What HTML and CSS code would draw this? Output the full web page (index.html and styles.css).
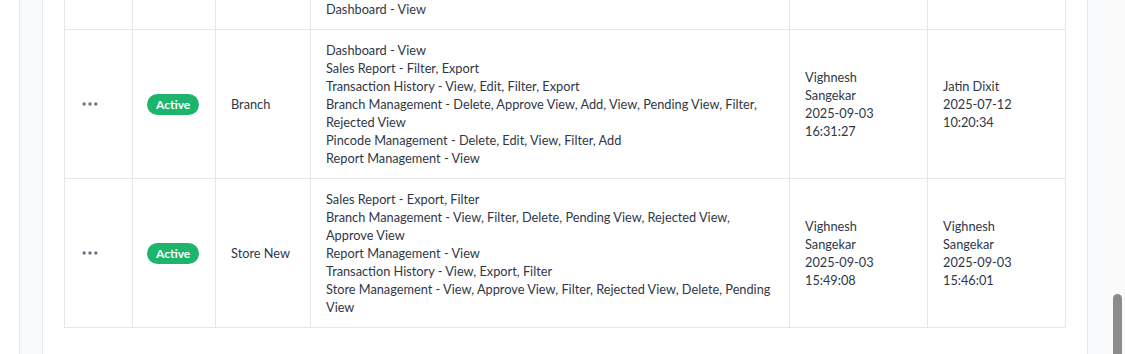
FILE: index.html
```html
<!DOCTYPE html>
<html lang="en">
<head>
<meta charset="utf-8">
<title>Roles</title>
<link rel="stylesheet" href="styles.css">
</head>
<body>
<div class="app">
  <aside class="rail"></aside>
  <div class="gutter"></div>
  <main class="card">
    <table class="roles">
      <colgroup>
        <col class="c-act"><col class="c-status"><col class="c-name"><col class="c-perm"><col class="c-by"><col class="c-by">
      </colgroup>
      <tbody>
        <tr>
          <td></td>
          <td></td>
          <td></td>
          <td class="perm">
            <div>Dashboard - View</div>
          </td>
          <td class="by"></td>
          <td class="by"></td>
        </tr>
        <tr>
          <td class="act"><button class="more" aria-label="More actions"><svg viewBox="0 0 24 24" width="20" height="20" fill="none" stroke="currentColor" stroke-width="2" stroke-linecap="round" stroke-linejoin="round"><circle cx="12" cy="12" r="1"/><circle cx="19" cy="12" r="1"/><circle cx="5" cy="12" r="1"/></svg></button></td>
          <td class="status"><span class="badge">Active</span></td>
          <td>Branch</td>
          <td class="perm">
            <div>Dashboard - View</div>
            <div>Sales Report - Filter, Export</div>
            <div>Transaction History - View, Edit, Filter, Export</div>
            <div>Branch Management - Delete, Approve View, Add, View, Pending View, Filter, Rejected View</div>
            <div>Pincode Management - Delete, Edit, View, Filter, Add</div>
            <div>Report Management - View</div>
          </td>
          <td class="by">Vighnesh Sangekar<br>2025-09-03<br>16:31:27</td>
          <td class="by">Jatin Dixit<br>2025-07-12<br>10:20:34</td>
        </tr>
        <tr>
          <td class="act"><button class="more" aria-label="More actions"><svg viewBox="0 0 24 24" width="20" height="20" fill="none" stroke="currentColor" stroke-width="2" stroke-linecap="round" stroke-linejoin="round"><circle cx="12" cy="12" r="1"/><circle cx="19" cy="12" r="1"/><circle cx="5" cy="12" r="1"/></svg></button></td>
          <td class="status"><span class="badge">Active</span></td>
          <td>Store New</td>
          <td class="perm">
            <div>Sales Report - Export, Filter</div>
            <div>Branch Management - View, Filter, Delete, Pending View, Rejected View, Approve View</div>
            <div>Report Management - View</div>
            <div>Transaction History - View, Export, Filter</div>
            <div>Store Management - View, Approve View, Filter, Rejected View, Delete, Pending View</div>
          </td>
          <td class="by">Vighnesh Sangekar<br>2025-09-03<br>15:49:08</td>
          <td class="by">Vighnesh Sangekar<br>2025-09-03<br>15:46:01</td>
        </tr>
      </tbody>
    </table>
  </main>
  <div class="gutter gutter-right"></div>
  <div class="scrollbar"><div class="thumb"></div></div>
</div>
</body>
</html>
```

FILE: styles.css
```css
* { box-sizing: border-box; }
html, body { margin: 0; padding: 0; }
body {
  font-family: "Lato", "Noto Sans", sans-serif;
  font-size: 12.75px;
  color: #2f3747;
  background: #ffffff;
}
.app {
  display: flex;
  height: 100vh;
  overflow: hidden;
}
.rail {
  width: 20px;
  flex: none;
  background: #ffffff;
  border-right: 1px solid #e4e6ec;
}
.gutter {
  width: 23px;
  flex: none;
  background: #f8f9fb;
  border-right: 1px solid #e4e6ec;
}
.gutter-right {
  width: 23px;
  border-right: none;
  border-left: 1px solid #e4e6ec;
}
.card {
  width: 1044px;
  flex: none;
  background: #ffffff;
  display: flex;
  flex-direction: column;
  justify-content: flex-end;
  padding: 0 0 26px 21px;
}
.scrollbar {
  width: 15px;
  flex: none;
  background: #fafafa;
  display: flex;
  flex-direction: column;
  justify-content: flex-end;
  padding: 0 3px 0 3px;
}
.thumb {
  height: 70px;
  margin-bottom: -10px;
  background: #8b8b8b;
  border-radius: 5px;
}
.roles {
  width: 1002px;
  table-layout: fixed;
  border-collapse: collapse;
  flex: none;
}
.c-act { width: 68px; }
.c-status { width: 83px; }
.c-name { width: 95px; }
.c-perm { width: 479px; }
.c-by { width: 138px; }
.roles td {
  border: 1px solid #e4e6ec;
  padding: 11px 15px;
  line-height: 18px;
  vertical-align: middle;
  text-align: left;
}
.roles tr:first-child td { border-top: none; }
.roles td.status { padding-left: 14px; }
.roles td.by { padding-right: 34px; }
.more {
  display: inline-flex;
  align-items: center;
  border: none;
  background: transparent;
  padding: 0;
  color: #6b7280;
  margin-top: -3px;
  vertical-align: middle;
}
.more svg { display: block; }
.badge {
  display: inline-block;
  background: #1cb56b;
  color: #ffffff;
  font-weight: 700;
  font-size: 12px;
  height: 21px;
  line-height: 21px;
  padding: 0 9px;
  border-radius: 11px;
}
```
